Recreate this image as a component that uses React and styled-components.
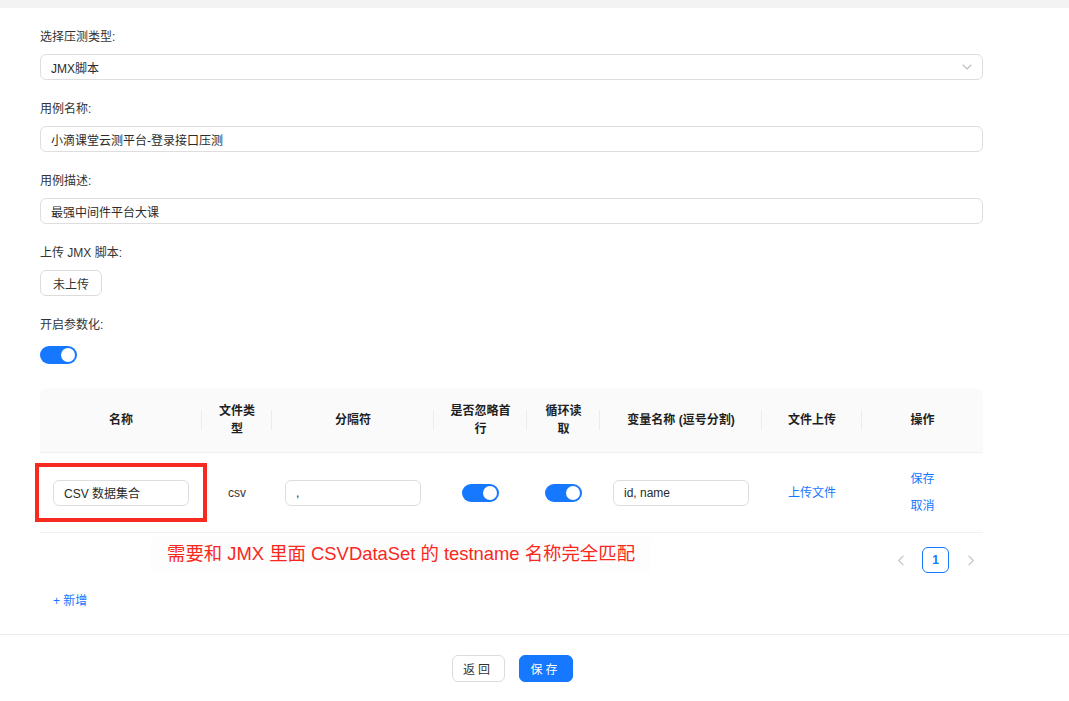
import React from 'react';
import styled, { createGlobalStyle } from 'styled-components';

const GlobalStyle = createGlobalStyle`
  body {
    margin: 0;
    background: #fff;
    font-family: "Liberation Sans", "Noto Sans CJK SC", sans-serif;
    color: #333;
  }
  * { box-sizing: border-box; }
`;

const BLUE = '#1677ff';

const Page = styled.div`
  min-height: 701px;
  background: #fff;
`;

const TopStrip = styled.div`
  height: 8px;
  background: #f3f3f3;
`;

const Body = styled.div`
  width: 943px;
  margin-left: 40px;
  padding-top: 19px;
`;

const Form = styled.div`
  display: flex;
  flex-direction: column;
  gap: 19px;
`;

const FormItem = styled.div`
  display: flex;
  flex-direction: column;
  gap: 7px;
`;

const Label = styled.div`
  font-size: 12px;
  line-height: 20px;
  color: #333;
`;

const InputBox = styled.div`
  height: 26px;
  width: 100%;
  border: 1px solid #dedede;
  border-radius: 6px;
  padding: 0 10px;
  display: flex;
  align-items: center;
  justify-content: space-between;
  font-size: 12px;
  color: #2b2b2b;
  background: #fff;
  white-space: nowrap;
`;

const Button = styled.div`
  height: ${p => p.$h || 26}px;
  width: ${p => p.$w ? `${p.$w}px` : 'auto'};
  padding: 0 ${p => p.$w ? 0 : 12}px;
  display: inline-flex;
  align-items: center;
  justify-content: center;
  border-radius: 6px;
  font-size: 12px;
  letter-spacing: ${p => p.$spaced ? '3px' : '0'};
  border: 1px solid ${p => p.$primary ? BLUE : '#dcdcdc'};
  background: ${p => p.$primary ? BLUE : '#fff'};
  color: ${p => p.$primary ? '#fff' : '#333'};
  align-self: flex-start;
`;

const SwitchWrap = styled.div`
  height: 26px;
  display: flex;
  align-items: center;
  justify-content: ${p => p.$center ? 'center' : 'flex-start'};
`;

const SwitchTrack = styled.div`
  position: relative;
  width: 37px;
  height: 18px;
  border-radius: 9px;
  background: ${BLUE};
  &::after {
    content: '';
    position: absolute;
    top: 2px;
    right: 2px;
    width: 14px;
    height: 14px;
    border-radius: 50%;
    background: #fff;
  }
`;

const TableArea = styled.div`
  position: relative;
  margin-top: 20px;
`;

const Table = styled.table`
  width: 943px;
  table-layout: fixed;
  border-collapse: separate;
  border-spacing: 0;
`;

const Th = styled.th`
  position: relative;
  background: #fafafa;
  padding: 14px 16px;
  height: 65px;
  font-size: 12px;
  line-height: 18px;
  font-weight: 600;
  color: #1f1f1f;
  text-align: center;
  border-bottom: 1px solid #f0f0f0;
  &:first-child { border-top-left-radius: 8px; }
  &:last-child { border-top-right-radius: 8px; }
  &:not(:last-child)::before {
    content: '';
    position: absolute;
    right: 0;
    top: 50%;
    transform: translateY(-50%);
    width: 1px;
    height: 20px;
    background: #ececec;
  }
`;

const Td = styled.td`
  height: 80px;
  padding: 0 13px;
  border-bottom: 1px solid #f0f0f0;
  font-size: 12px;
  color: #333;
  text-align: ${p => p.$align || 'center'};
  vertical-align: middle;
`;

const Link = styled.span`
  color: ${BLUE};
  font-size: 12px;
  line-height: 20px;
`;

const Actions = styled.div`
  display: flex;
  flex-direction: column;
  align-items: center;
  gap: 7px;
`;

const RedFrame = styled.div`
  position: absolute;
  left: -5px;
  top: 75px;
  width: 172px;
  height: 59px;
  border: 4px solid #f72a1f;
  pointer-events: none;
`;

const Note = styled.div`
  position: absolute;
  left: 111px;
  top: 149px;
  padding: 2px 16px;
  background: #fdfdfd;
  color: #f8281c;
  font-size: 18.4px;
  line-height: 30px;
  white-space: nowrap;
`;

const PagerRow = styled.div`
  display: flex;
  justify-content: flex-end;
  gap: 8px;
  margin-top: 14px;
`;

const PageItem = styled.div`
  width: ${p => p.$active ? 27 : 26}px;
  height: 26px;
  display: flex;
  align-items: center;
  justify-content: center;
  border-radius: 6px;
  border: 1px solid ${p => p.$active ? BLUE : 'transparent'};
  color: ${BLUE};
  font-size: 12px;
  font-weight: 600;
`;

const AddRow = styled.div`
  margin-top: 18px;
  padding-left: 13px;
  height: 20px;
  display: flex;
  align-items: center;
`;

const Divider = styled.div`
  margin-top: 23px;
  height: 1px;
  background: #ebebeb;
`;

const Footer = styled.div`
  display: flex;
  justify-content: center;
  gap: 14px;
  padding: 20px 45px 0 0;
`;

const Chevron = ({ dir = 'down', color = '#bfbfbf', size = 10 }) => {
  const d = {
    down: 'M1 3 L5 7 L9 3',
    left: 'M6.5 1 L2.5 5 L6.5 9',
    right: 'M3.5 1 L7.5 5 L3.5 9',
  }[dir];
  return (
    <svg width={size} height={size} viewBox="0 0 10 10" fill="none">
      <path d={d} stroke={color} strokeWidth="1.1" strokeLinecap="round" strokeLinejoin="round" />
    </svg>
  );
};

const columns = [
  { title: '名称', width: 162 },
  { title: '文件类型', width: 70 },
  { title: '分隔符', width: 162 },
  { title: '是否忽略首行', width: 93 },
  { title: '循环读取', width: 73 },
  { title: '变量名称 (逗号分割)', width: 162 },
  { title: '文件上传', width: 100 },
  { title: '操作', width: 121 },
];

export default function App() {
  return (
    <Page>
      <GlobalStyle />
      <TopStrip />
      <Body>
        <Form>
          <FormItem>
            <Label>选择压测类型:</Label>
            <InputBox>
              <span>JMX脚本</span>
              <Chevron dir="down" />
            </InputBox>
          </FormItem>
          <FormItem>
            <Label>用例名称:</Label>
            <InputBox>小滴课堂云测平台-登录接口压测</InputBox>
          </FormItem>
          <FormItem>
            <Label>用例描述:</Label>
            <InputBox>最强中间件平台大课</InputBox>
          </FormItem>
          <FormItem>
            <Label>上传 JMX 脚本:</Label>
            <Button>未上传</Button>
          </FormItem>
          <FormItem>
            <Label>开启参数化:</Label>
            <SwitchWrap><SwitchTrack /></SwitchWrap>
          </FormItem>
        </Form>

        <TableArea>
          <Table>
            <colgroup>
              {columns.map(c => <col key={c.title} style={{ width: c.width }} />)}
            </colgroup>
            <thead>
              <tr>
                {columns.map(c => <Th key={c.title}>{c.title}</Th>)}
              </tr>
            </thead>
            <tbody>
              <tr>
                <Td><InputBox>CSV 数据集合</InputBox></Td>
                <Td>csv</Td>
                <Td><InputBox>,</InputBox></Td>
                <Td><SwitchWrap $center><SwitchTrack /></SwitchWrap></Td>
                <Td><SwitchWrap $center><SwitchTrack /></SwitchWrap></Td>
                <Td><InputBox>id, name</InputBox></Td>
                <Td><Link>上传文件</Link></Td>
                <Td>
                  <Actions>
                    <Link>保存</Link>
                    <Link>取消</Link>
                  </Actions>
                </Td>
              </tr>
            </tbody>
          </Table>

          <PagerRow>
            <PageItem><Chevron dir="left" color="#c4c4c4" size={11} /></PageItem>
            <PageItem $active>1</PageItem>
            <PageItem><Chevron dir="right" color="#c4c4c4" size={11} /></PageItem>
          </PagerRow>

          <RedFrame />
          <Note>需要和 JMX 里面 CSVDataSet 的 testname 名称完全匹配</Note>
        </TableArea>

        <AddRow><Link>+ 新增</Link></AddRow>
      </Body>

      <Divider />
      <Footer>
        <Button $w={53} $h={27} $spaced>返回</Button>
        <Button $w={54} $h={27} $primary $spaced>保存</Button>
      </Footer>
    </Page>
  );
}
